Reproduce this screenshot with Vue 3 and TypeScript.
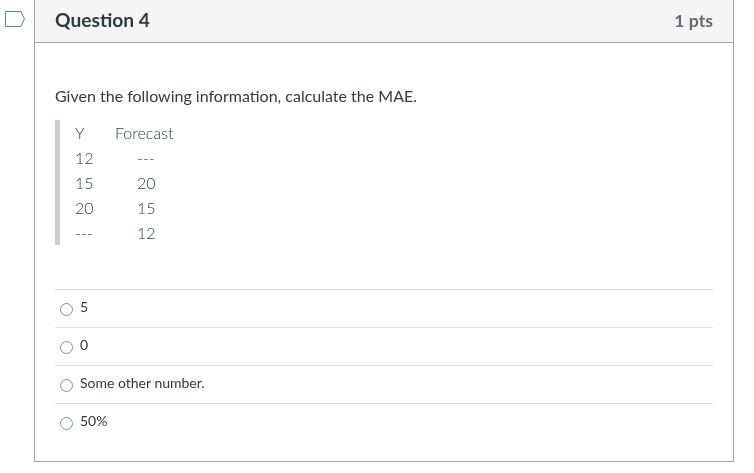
<script setup lang="ts">
const rows = [
  ['12', '---'],
  ['15', '20'],
  ['20', '15'],
  ['---', '12'],
]
const answers = ['5', '0', 'Some other number.', '50%']
</script>

<template>
  <div class="page">
    <div class="flag-col">
      <svg class="flag" width="20" height="16" viewBox="0 0 20 16">
        <path d="M0.5 0.5H16L19.4 8L16 15.5H0.5Z" fill="none" stroke="#4f86a6" stroke-width="1" />
      </svg>
    </div>
    <div class="card">
      <div class="head">
        <span class="title">Question 4</span>
        <span class="pts">1 pts</span>
      </div>
      <div class="body">
        <p class="prompt">Given the following information, calculate the MAE.</p>
        <div class="quote">
          <div class="grid">
            <span>Y</span><span>Forecast</span>
            <template v-for="(r, i) in rows" :key="i">
              <span>{{ r[0] }}</span>
              <span class="val">{{ r[1] }}</span>
            </template>
          </div>
        </div>
        <div class="answers">
          <label v-for="a in answers" :key="a" class="answer">
            <span class="radio"></span>
            <span class="text">{{ a }}</span>
          </label>
        </div>
      </div>
    </div>
  </div>
</template>

<style scoped>
.page {
  display: flex;
  width: 754px;
  height: 473px;
  font-family: Lato, "Liberation Sans", sans-serif;
  color: #2d3b45;
  will-change: transform;
}
.flag-col {
  width: 34px;
  flex: none;
  padding: 11px 0 0 5px;
  box-sizing: border-box;
}
.flag {
  display: block;
}
.card {
  width: 700px;
  height: 462px;
  box-sizing: border-box;
  border: 1px solid #a5a5a5;
  border-top: none;
  display: flex;
  flex-direction: column;
}
.head {
  height: 43px;
  box-sizing: border-box;
  flex: none;
  background: #f5f5f5;
  border-bottom: 1px solid #a5a5a5;
  display: flex;
  align-items: center;
  justify-content: space-between;
  padding: 0 20px 2px 20px;
  font-weight: 700;
}
.title {
  font-size: 19.2px;
  margin-bottom: 2px;
}
.pts {
  font-size: 17.6px;
  color: #5f6a72;
}
.body {
  padding: 0 20px;
}
.prompt {
  margin: 43px 0 0;
  font-size: 16px;
  line-height: 20px;
}
.quote {
  margin-top: 14px;
  border-left: 5px solid #c7cdd1;
  padding-left: 15px;
  height: 125px;
}
.grid {
  display: grid;
  grid-template-columns: 40px auto;
  justify-content: start;
  grid-auto-rows: 25px;
  align-items: center;
  font-size: 16px;
  font-weight: 300;
}
.val {
  padding-left: 22px;
}
.answers {
  margin-top: 44px;
}
.answer {
  display: flex;
  height: 38px;
  box-sizing: border-box;
  border-top: 1px solid #ddd;
  font-size: 14px;
  padding: 9px 0 0 5px;
}
.radio {
  width: 13px;
  height: 13px;
  box-sizing: border-box;
  border: 1px solid #858f96;
  border-radius: 50%;
  margin: 4px 7px 0 0;
  flex: none;
}
.text {
  line-height: 16px;
}
</style>
